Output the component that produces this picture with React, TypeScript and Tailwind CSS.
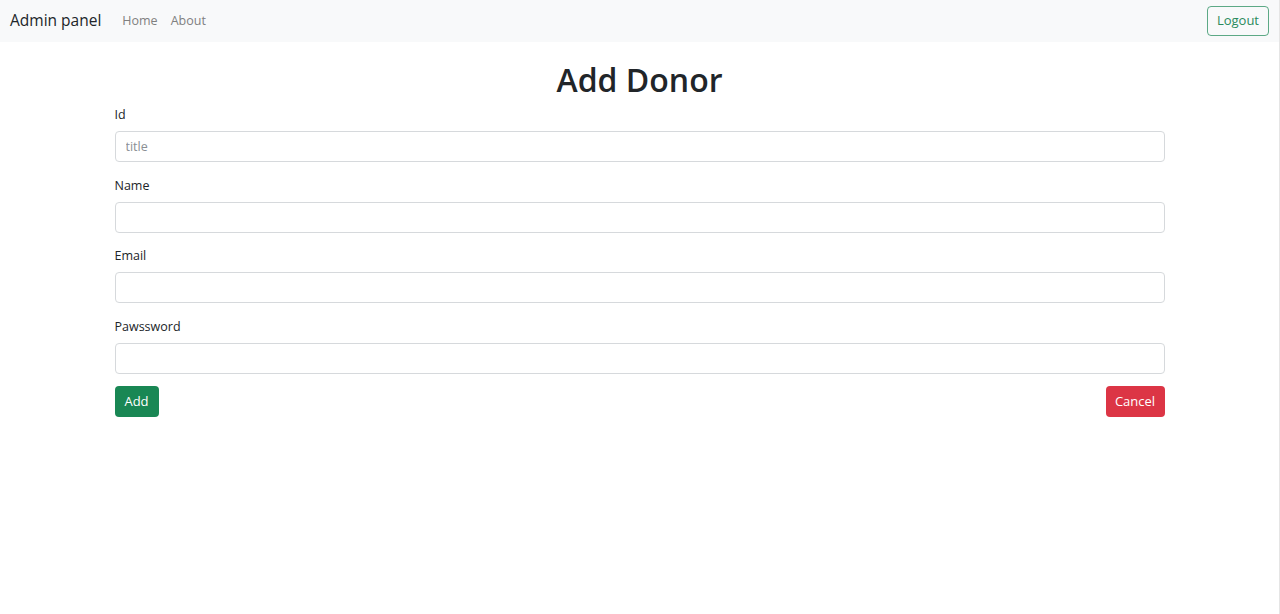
import React from "react";

const fields = [
  { label: "Id", placeholder: "title" },
  { label: "Name", placeholder: "" },
  { label: "Email", placeholder: "" },
  { label: "Pawssword", placeholder: "" },
];

export default function App() {
  return (
    <div className="min-h-[614px] bg-white text-[#212529] font-['Open_Sans',sans-serif] border-r border-[#e5e5e5]">
      {/* Navbar */}
      <nav className="h-[42px] bg-[#f8f9fa] flex items-center justify-between pl-[10px] pr-[10px]">
        <div className="flex items-center">
          <span className="text-[15.5px] text-[#212529] mr-[21px]">Admin panel</span>
          <a className="text-[12.5px] text-[#808080] mr-[13px]">Home</a>
          <a className="text-[12.5px] text-[#808080]">About</a>
        </div>
        <button className="h-[30px] px-[9px] text-[13px] text-[#2a8a5c] border border-[#198754]/70 rounded-[4px] bg-transparent">
          Logout
        </button>
      </nav>

      {/* Form */}
      <div className="w-[1050px] mx-auto">
        <h1 className="text-[32px] font-semibold text-center leading-[43px] mt-[16px] mb-[3px]">Add Donor</h1>
        {fields.map((f) => (
          <div key={f.label} className="mb-[12.5px]">
            <label className="block h-5 leading-[22px] text-[12.5px] mb-[7px]">{f.label}</label>
            <input
              placeholder={f.placeholder}
              className="block w-full h-[31px] px-[10px] text-[12.5px] border border-[#d6d9dc] rounded-[4px] placeholder:text-[#8a8f94] outline-none"
            />
          </div>
        ))}
        <div className="flex justify-between">
          <button className="h-[31px] w-[44px] rounded-[4px] bg-[#198754] text-white text-[13px]">Add</button>
          <button className="h-[31px] w-[59px] rounded-[4px] bg-[#dc3545] text-white text-[13px]">Cancel</button>
        </div>
      </div>
    </div>
  );
}
